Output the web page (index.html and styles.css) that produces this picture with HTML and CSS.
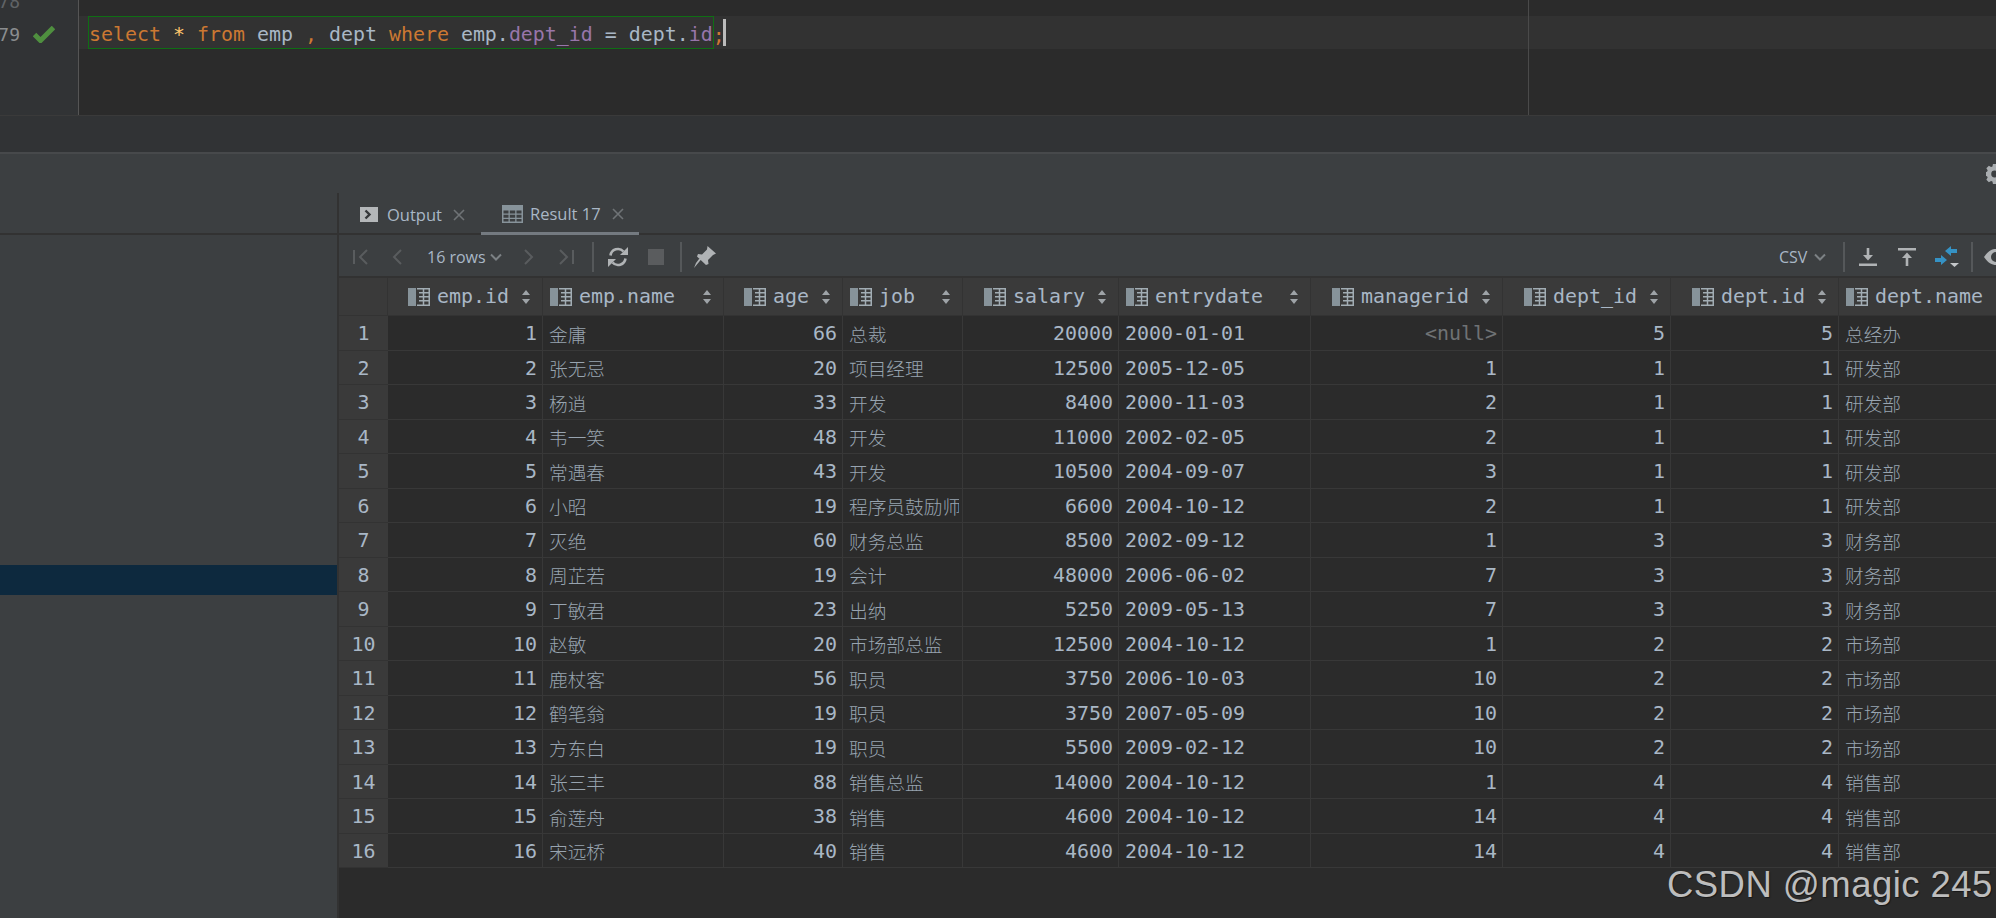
FILE: index.html
```
<!DOCTYPE html>
<html lang="zh-CN">
<head>
<meta charset="utf-8">
<title>Query result</title>
<link rel="stylesheet" href="styles.css">
</head>
<body>
<svg class="defs" width="0" height="0" aria-hidden="true">
  <symbol id="col" viewBox="0 0 22 18">
    <rect x="0" y="0" width="8" height="18" fill="#87939a"/>
    <path d="M9 .75h13M9 17.25h13M11 4.75h11M11 8.75h11M11 12.75h11M15.5 .75v16.5M21.25 0v18" fill="none" stroke="#a2adb4" stroke-width="1.5"/>
  </symbol>
  <symbol id="sort" viewBox="0 0 8 14">
    <path d="M4 0l4 5H0zM4 14l4-5H0z" fill="#9ea3a7"/>
  </symbol>
  <symbol id="close" viewBox="0 0 12 12">
    <path d="M1 1l10 10M11 1L1 11" fill="none" stroke="#6f7376" stroke-width="1.6"/>
  </symbol>
  <symbol id="chev" viewBox="0 0 12 8">
    <path d="M1 1.5l5 5 5-5" fill="none" stroke="#7c8184" stroke-width="2"/>
  </symbol>
</svg>

<section class="editor">
  <div class="gutter">
    <div class="gline"><span class="ln old">78</span></div>
    <div class="gline"><span class="ln">79</span>
      <svg class="check" viewBox="0 0 22 17" width="22" height="17"><path d="M1.500 8.500l6 6L20.500 1.500" fill="none" stroke="#4f8f3f" stroke-width="5"/></svg>
    </div>
  </div>
  <div class="code">
    <div class="margin-line"></div>
    <div class="cline"></div>
    <div class="cline current"><span class="match"><span class="kw">select</span> <span class="star">*</span> <span class="kw">from</span> emp <span class="kw">,</span> dept <span class="kw">where</span> emp.<span class="fld">dept_id</span> = dept.<span class="fld">id</span></span><span class="kw semi">;</span><span class="caret"></span></div>
  </div>
</section>

<div class="strip"></div>

<section class="panel">
  <div class="panel-top">
    <svg class="gear" viewBox="0 0 20 20" width="20" height="20"><path d="M8 0h4l.6 2.800 1.600.7L16.700 2l2.900 2.900-1.500 2.400.7 1.700 2.800.6v4l-2.800.6-.7 1.600 1.500 2.500-2.900 2.800-2.500-1.500-1.600.7L12 23H8l-.6-2.800-1.600-.7L3.300 21 .4 18.100l1.500-2.500-.7-1.600L-1.600 13.400v-4l2.800-.6.7-1.700L.4 4.900 3.300 2l2.500 1.500 1.600-.7zM10 7.500a4 4 0 1 0 0 8 4 4 0 0 0 0-8z" fill="#a9adb0" fill-rule="evenodd" transform="scale(.87)"/></svg>
  </div>
  <div class="panel-main">
    <aside class="side">
      <div class="side-head"></div>
      <div class="side-sel"></div>
    </aside>
    <div class="results">
      <div class="tabs">
        <div class="tab">
          <svg class="tab-ic" viewBox="0 0 18 15" width="18" height="15"><path d="M0 0h18v15H0z" fill="#b4b7b9"/><path d="M5.500 3.500l4 4-4 4" fill="none" stroke="#35383a" stroke-width="2.400"/></svg>
          <span>Output</span>
          <svg class="tab-x" width="12" height="12"><use href="#close"/></svg>
        </div>
        <div class="tab active">
          <svg class="tab-ic" viewBox="0 0 21 18" width="21" height="18"><path d="M0 0h21v18H0z" fill="#87939a"/><path d="M1.500 5.500h5v3h-5zM7.800 5.500h5.400v3H7.800zM14.500 5.500h5v3h-5zM1.500 9.800h5v3h-5zM7.800 9.800h5.400v3H7.800zM14.500 9.800h5v3h-5zM1.500 14h5v2.500h-5zM7.800 14h5.400v2.500H7.800zM14.500 14h5v2.500h-5z" fill="#3c3f41"/></svg>
          <span>Result 17</span>
          <svg class="tab-x" width="12" height="12"><use href="#close"/></svg>
        </div>
      </div>
      <div class="toolbar">
        <svg class="tb first" viewBox="0 0 16 16" width="16" height="16"><path d="M1 1v14M14 1L7 8l7 7" fill="none" stroke="#595c5e" stroke-width="2"/></svg>
        <svg class="tb prev" viewBox="0 0 10 16" width="10" height="16"><path d="M9 1L2 8l7 7" fill="none" stroke="#595c5e" stroke-width="2"/></svg>
        <span class="rows">16 rows</span>
        <svg class="chev" width="12" height="8"><use href="#chev"/></svg>
        <svg class="tb next" viewBox="0 0 10 16" width="10" height="16"><path d="M1 1l7 7-7 7" fill="none" stroke="#595c5e" stroke-width="2"/></svg>
        <svg class="tb last" viewBox="0 0 16 16" width="16" height="16"><path d="M15 1v14M2 1l7 7-7 7" fill="none" stroke="#595c5e" stroke-width="2"/></svg>
        <i class="sep sep-a"></i>
        <svg class="tb refresh" viewBox="0 0 20 20" width="20" height="20"><path d="M2.500 8.500A7.500 7.500 0 0 1 15.500 4.500M17.500 11.500A7.500 7.500 0 0 1 4.500 15.500" fill="none" stroke="#b0b3b5" stroke-width="2.600"/><path d="M12 8h8V0zM8 12H0v8z" fill="#b0b3b5"/></svg>
        <i class="stop"></i>
        <i class="sep sep-b"></i>
        <svg class="tb pin" viewBox="0 0 22 22" width="22" height="22"><path d="M13.500 0L22 7.500l-3 1.500-5 5 .5 4-2.500 1L3 10.500l1-2.500 4 .5 5-5zM7.500 13L0 22l2-5 3-4z" fill="#b0b3b5"/></svg>
        <span class="csv">CSV</span>
        <svg class="chev chev-csv" width="12" height="8"><use href="#chev"/></svg>
        <i class="sep sep-c"></i>
        <svg class="tb dl" viewBox="0 0 18 18" width="18" height="18"><path d="M0 15.500h18v2.500H0zM7.700 0h2.600v7H14l-5 5.500L4 7h3.700z" fill="#b0b3b5"/></svg>
        <svg class="tb ul" viewBox="0 0 18 18" width="18" height="18"><path d="M0 0h18v2.500H0zM7.700 18h2.600v-8H14L9 4.500 4 10h3.700z" fill="#b0b3b5"/></svg>
        <svg class="tb cmp" viewBox="0 0 24 22" width="24" height="22"><path d="M10 5l6-5v3h6v4h-6v3zM12 14l-6 5v-3H0v-4h6V9z" fill="#3592c4"/><path d="M15 17h9l-4.500 4z" fill="#c4c7c9"/></svg>
        <i class="sep sep-d"></i>
        <svg class="tb eye" viewBox="0 0 24 16" width="24" height="16"><path d="M0 8C4 2 8 0 12 0s8 2 12 8c-4 6-8 8-12 8S4 14 0 8zm12-5a5 5 0 1 0 0 10 5 5 0 0 0 0-10z" fill="#b0b3b5" fill-rule="evenodd"/></svg>
      </div>
      <div class="grid">
        <div class="h corner"></div>
        <div class="h num"><div class="lab"><svg class="ci"><use href="#col"/></svg>emp.id</div><svg class="so"><use href="#sort"/></svg></div>
        <div class="h txt"><div class="lab"><svg class="ci"><use href="#col"/></svg>emp.name</div><svg class="so"><use href="#sort"/></svg></div>
        <div class="h num"><div class="lab"><svg class="ci"><use href="#col"/></svg>age</div><svg class="so"><use href="#sort"/></svg></div>
        <div class="h txt"><div class="lab"><svg class="ci"><use href="#col"/></svg>job</div><svg class="so"><use href="#sort"/></svg></div>
        <div class="h num"><div class="lab"><svg class="ci"><use href="#col"/></svg>salary</div><svg class="so"><use href="#sort"/></svg></div>
        <div class="h txt"><div class="lab"><svg class="ci"><use href="#col"/></svg>entrydate</div><svg class="so"><use href="#sort"/></svg></div>
        <div class="h num"><div class="lab"><svg class="ci"><use href="#col"/></svg>managerid</div><svg class="so"><use href="#sort"/></svg></div>
        <div class="h num"><div class="lab"><svg class="ci"><use href="#col"/></svg>dept_id</div><svg class="so"><use href="#sort"/></svg></div>
        <div class="h num"><div class="lab"><svg class="ci"><use href="#col"/></svg>dept.id</div><svg class="so"><use href="#sort"/></svg></div>
        <div class="h txt last-h"><div class="lab"><svg class="ci"><use href="#col"/></svg>dept.name</div></div>

        <div class="r">1</div><div class="c n">1</div><div class="c t">金庸</div><div class="c n">66</div><div class="c t">总裁</div><div class="c n">20000</div><div class="c d">2000-01-01</div><div class="c n null">&lt;null&gt;</div><div class="c n">5</div><div class="c n">5</div><div class="c t">总经办</div>
        <div class="r">2</div><div class="c n">2</div><div class="c t">张无忌</div><div class="c n">20</div><div class="c t">项目经理</div><div class="c n">12500</div><div class="c d">2005-12-05</div><div class="c n">1</div><div class="c n">1</div><div class="c n">1</div><div class="c t">研发部</div>
        <div class="r">3</div><div class="c n">3</div><div class="c t">杨逍</div><div class="c n">33</div><div class="c t">开发</div><div class="c n">8400</div><div class="c d">2000-11-03</div><div class="c n">2</div><div class="c n">1</div><div class="c n">1</div><div class="c t">研发部</div>
        <div class="r">4</div><div class="c n">4</div><div class="c t">韦一笑</div><div class="c n">48</div><div class="c t">开发</div><div class="c n">11000</div><div class="c d">2002-02-05</div><div class="c n">2</div><div class="c n">1</div><div class="c n">1</div><div class="c t">研发部</div>
        <div class="r">5</div><div class="c n">5</div><div class="c t">常遇春</div><div class="c n">43</div><div class="c t">开发</div><div class="c n">10500</div><div class="c d">2004-09-07</div><div class="c n">3</div><div class="c n">1</div><div class="c n">1</div><div class="c t">研发部</div>
        <div class="r">6</div><div class="c n">6</div><div class="c t">小昭</div><div class="c n">19</div><div class="c t"><span class="clip">程序员鼓励师</span></div><div class="c n">6600</div><div class="c d">2004-10-12</div><div class="c n">2</div><div class="c n">1</div><div class="c n">1</div><div class="c t">研发部</div>
        <div class="r">7</div><div class="c n">7</div><div class="c t">灭绝</div><div class="c n">60</div><div class="c t">财务总监</div><div class="c n">8500</div><div class="c d">2002-09-12</div><div class="c n">1</div><div class="c n">3</div><div class="c n">3</div><div class="c t">财务部</div>
        <div class="r">8</div><div class="c n">8</div><div class="c t">周芷若</div><div class="c n">19</div><div class="c t">会计</div><div class="c n">48000</div><div class="c d">2006-06-02</div><div class="c n">7</div><div class="c n">3</div><div class="c n">3</div><div class="c t">财务部</div>
        <div class="r">9</div><div class="c n">9</div><div class="c t">丁敏君</div><div class="c n">23</div><div class="c t">出纳</div><div class="c n">5250</div><div class="c d">2009-05-13</div><div class="c n">7</div><div class="c n">3</div><div class="c n">3</div><div class="c t">财务部</div>
        <div class="r">10</div><div class="c n">10</div><div class="c t">赵敏</div><div class="c n">20</div><div class="c t">市场部总监</div><div class="c n">12500</div><div class="c d">2004-10-12</div><div class="c n">1</div><div class="c n">2</div><div class="c n">2</div><div class="c t">市场部</div>
        <div class="r">11</div><div class="c n">11</div><div class="c t">鹿杖客</div><div class="c n">56</div><div class="c t">职员</div><div class="c n">3750</div><div class="c d">2006-10-03</div><div class="c n">10</div><div class="c n">2</div><div class="c n">2</div><div class="c t">市场部</div>
        <div class="r">12</div><div class="c n">12</div><div class="c t">鹤笔翁</div><div class="c n">19</div><div class="c t">职员</div><div class="c n">3750</div><div class="c d">2007-05-09</div><div class="c n">10</div><div class="c n">2</div><div class="c n">2</div><div class="c t">市场部</div>
        <div class="r">13</div><div class="c n">13</div><div class="c t">方东白</div><div class="c n">19</div><div class="c t">职员</div><div class="c n">5500</div><div class="c d">2009-02-12</div><div class="c n">10</div><div class="c n">2</div><div class="c n">2</div><div class="c t">市场部</div>
        <div class="r">14</div><div class="c n">14</div><div class="c t">张三丰</div><div class="c n">88</div><div class="c t">销售总监</div><div class="c n">14000</div><div class="c d">2004-10-12</div><div class="c n">1</div><div class="c n">4</div><div class="c n">4</div><div class="c t">销售部</div>
        <div class="r">15</div><div class="c n">15</div><div class="c t">俞莲舟</div><div class="c n">38</div><div class="c t">销售</div><div class="c n">4600</div><div class="c d">2004-10-12</div><div class="c n">14</div><div class="c n">4</div><div class="c n">4</div><div class="c t">销售部</div>
        <div class="r">16</div><div class="c n">16</div><div class="c t">宋远桥</div><div class="c n">40</div><div class="c t">销售</div><div class="c n">4600</div><div class="c d">2004-10-12</div><div class="c n">14</div><div class="c n">4</div><div class="c n">4</div><div class="c t">销售部</div>
      </div>
    </div>
  </div>
</section>
<div class="watermark">CSDN @magic 245</div>
</body>
</html>
```
FILE: styles.css
```
* { box-sizing: border-box; }
html, body { margin: 0; height: 918px; overflow: hidden; }
body {
  width: 1996px;
  display: flex;
  flex-direction: column;
  position: relative;
  background: #3c3f41;
  color: #a9b7c6;
  font-family: "DejaVu Sans Mono", "Noto Sans CJK SC", monospace;
  font-size: 19.93px;
}
.defs { position: absolute; }

/* editor */
.editor { height: 115px; display: flex; background: #2b2b2b; overflow: hidden; flex: none; }
.gutter { width: 79px; flex: none; background: #313335; border-right: 1px solid #555; margin-top: -17px; }
.gline { height: 33px; display: flex; align-items: center; }
.ln { width: 20px; display: flex; justify-content: flex-end; white-space: nowrap; color: #8a8d8f; font-size: 18px; flex: none; padding-top: 4px; }
.ln.old { color: #606366; }
.check { margin-left: 13px; margin-top: 3px; }
.code { flex: 1; position: relative; margin-top: -17px; }
.margin-line { position: absolute; left: 1449px; top: 0; bottom: 0; width: 1px; background: #4a4a4a; }
.cline { height: 33px; padding-left: 9px; display: flex; align-items: center; white-space: pre; }
.current { background: #323232; }
.match { height: 33px; line-height: 27px; padding-top: 4px; border: 1px solid #0f6e14; margin-right: -1px; }
.semi { padding-top: 5px; }
.kw { color: #cc7832; }
.star { color: #ffc66d; }
.fld { color: #9876aa; }
.caret { width: 3px; height: 27px; background: #bbbbbb; margin-left: -2px; flex: none; }

.strip { height: 39px; flex: none; background: #313335; border-top: 1px solid #3a3a3a; border-bottom: 2px solid #47494b; }

/* panel */
.panel { flex: 1; display: flex; flex-direction: column; min-height: 0; overflow: hidden; }
.panel-top { height: 39px; flex: none; display: flex; justify-content: flex-end; align-items: center; }
.gear { margin-right: -10px; flex: none; }
.panel-main { flex: 1; display: flex; min-height: 0; }
.side { width: 337px; flex: none; }
.side-head { height: 42px; border-bottom: 2px solid #323232; }
.side-sel { height: 30px; margin-top: 330px; background: #0d293e; }
.results { flex: 1; min-width: 0; border-left: 2px solid #323232; display: flex; flex-direction: column; }

/* tabs */
.tabs { height: 42px; flex: none; display: flex; border-bottom: 2px solid #323232; }
.tab {
  display: flex; align-items: center; height: 41px; padding-top: 2px;
  font-family: "Open Sans", sans-serif; font-size: 16.500px; color: #a9b7c6;
}
.tab:first-child { width: 142px; padding-left: 21px; }
.tab.active { width: 158px; padding-left: 21px; border-bottom: 3px solid #747a80; height: 42px; }
.tab-ic { flex: none; margin-right: 9px; }
.active .tab-ic { margin-right: 7px; }
.tab-x { flex: none; margin-left: 11px; }

/* toolbar */
.toolbar {
  height: 43px; flex: none; display: flex; align-items: center; padding-top: 3px;
  border-bottom: 2px solid #323232;
  font-family: "Open Sans", sans-serif; font-size: 16px; color: #a9b7c6;
}
.tb { flex: none; }
.first { margin-left: 14px; }
.prev { margin-left: 23px; }
.rows { margin-left: 25px; width: 56px; white-space: nowrap; }
.chev { flex: none; margin-left: 7px; }
.next { margin-left: 22px; }
.last { margin-left: 24px; }
.sep { display: block; flex: none; width: 2px; height: 30px; background: #55585a; }
.sep-a { margin-left: 18px; }
.refresh { margin-left: 14px; }
.stop { display: block; flex: none; width: 16px; height: 16px; background: #5a5c5e; margin-left: 20px; }
.sep-b { margin-left: 16px; }
.pin { margin-left: 12px; }
.csv { margin-left: auto; width: 29px; }
.chev-csv { margin-left: 6px; }
.sep-c { margin-left: 17px; }
.dl { margin-left: 14px; }
.ul { margin-left: 21px; }
.cmp { margin-left: 19px; }
.sep-d { margin-left: 12px; }
.eye { margin-left: 11px; margin-right: -12px; }

/* grid */
.grid {
  flex: 1; background: #2b2b2b; overflow: hidden; align-content: start;
  display: grid;
  grid-template-columns: 49px 155px 181px 119px 120px 156px 192px 192px 168px 168px 200px;
  grid-template-rows: 38px repeat(16, 34.5px);
  line-height: 1;
}
.h {
  background: #3a3a3a; border-right: 1px solid #333; border-bottom: 1px solid #333;
  display: flex; align-items: center; padding: 0 12px 0 7px; white-space: nowrap;
  color: #a9b7c6; min-width: 0;
}
.lab { display: flex; align-items: center; gap: 7px; }
.ci { width: 22px; height: 18px; flex: none; }
.so { width: 8px; height: 14px; flex: none; margin-left: 13px; }
.num .lab { margin-left: auto; }
.txt .so { margin-left: auto; }
.r {
  background: #3a3a3a; border-bottom: 1px solid #333; padding-top: 3px;
  display: flex; align-items: center; justify-content: center;
}
.c {
  border-right: 1px solid #383838; border-bottom: 1px solid #383838;
  display: flex; align-items: center; padding: 3px 5px 0 6px; white-space: nowrap; min-width: 0;
}
.n { justify-content: flex-end; }
.t { font-size: 18.700px; font-weight: 300; color: #98a4b0; font-family: "Noto Sans CJK SC", sans-serif; }
.clip { display: block; overflow: hidden; flex: 1; margin-right: -2px; }
.null { color: #6f7274; }

.watermark {
  position: absolute; left: 1667px; top: 865px;
  font-family: "Liberation Sans", sans-serif; font-size: 36.500px; line-height: 1.1; letter-spacing: .45px;
  color: #bdbdbd; white-space: nowrap; text-shadow: 1px 1px 1px rgba(0,0,0,.45);
}
```
